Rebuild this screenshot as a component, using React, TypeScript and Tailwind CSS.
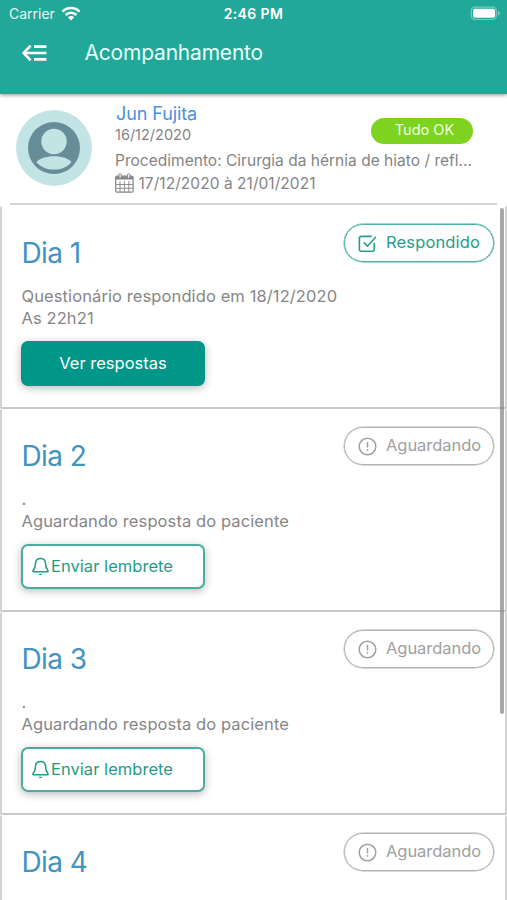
import clsx from "clsx";
import type { ReactNode } from "react";

type Day = {
  id: number;
  answered: boolean;
  lines?: string[];
};

const days: Day[] = [
  { id: 1, answered: true, lines: ["Questionário respondido em 18/12/2020", "As 22h21"] },
  { id: 2, answered: false, lines: [".", "Aguardando resposta do paciente"] },
  { id: 3, answered: false, lines: [".", "Aguardando resposta do paciente"] },
  { id: 4, answered: false },
];

function WifiIcon() {
  return (
    <svg width="20" height="15" viewBox="0 0 20 15" fill="none" stroke="white" strokeWidth="2.6">
      <path d="M1.5 5.6a12 12 0 0 1 17 0" />
      <path d="M4.6 9a7.6 7.6 0 0 1 10.8 0" />
      <path d="M10 14.4 6.9 11.3a4.4 4.4 0 0 1 6.2 0Z" fill="white" stroke="none" />
    </svg>
  );
}

function BatteryIcon() {
  return (
    <svg width="31" height="15" viewBox="0 0 31 15" fill="none">
      <rect x="1.3" y="1.1" width="25" height="12.4" rx="3.6" stroke="white" strokeOpacity="0.4" strokeWidth="1.2" />
      <rect x="3" y="2.8" width="22" height="9" rx="1.8" fill="white" />
      <path d="M28 5.2c1.2.4 1.7 1.2 1.7 2.1s-.5 1.7-1.7 2.1Z" fill="white" fillOpacity="0.45" />
    </svg>
  );
}

function BackIcon() {
  return (
    <svg width="26" height="18" viewBox="0 0 26 18" fill="none" stroke="white" strokeWidth="2.6">
      <path d="M9.6 1.7 2.6 9l7 7.3" />
      <path d="M3 9h22.400M13 2.600h12.400M13 15.400h12.400" />
    </svg>
  );
}

function Avatar() {
  return (
    <svg width="76" height="76" viewBox="0 0 76 76">
      <circle cx="38" cy="38" r="38" fill="#c3e4e5" />
      <circle cx="38" cy="38" r="26" fill="#678e98" />
      <circle cx="38" cy="31.500" r="12.700" fill="#c3e4e5" />
      <path d="M20.500 52.200C23 48.500 30 46.300 38 46.300s15 2.200 17.500 5.900C51 57.300 45 59.600 38 59.600s-13-2.300-17.500-7.400Z" fill="#c3e4e5" />
    </svg>
  );
}

function CalendarIcon() {
  return (
    <svg width="19" height="20" viewBox="0 0 19 20" fill="none" stroke="#858585">
      <rect x="0.7" y="3.2" width="17.4" height="16" rx="1.2" strokeWidth="1.2" />
      <path d="M0.7 5h17.4" strokeWidth="3" />
      <path d="M5 8v11M9.400 8v11M13.800 8v11M1 11.500h17M1 15.300h17" strokeWidth="0.9" />
      <rect x="4" y="0.7" width="2.2" height="4.5" rx="1" fill="white" />
      <rect x="12.6" y="0.7" width="2.2" height="4.5" rx="1" fill="white" />
    </svg>
  );
}

function CheckIcon() {
  return (
    <svg width="19" height="19" viewBox="0 0 19 19" fill="none" stroke="currentColor" strokeWidth="1.6" strokeLinecap="round" strokeLinejoin="round">
      <path d="M13.200 2.400H3.100A1.700 1.700 0 0 0 1.400 4.100v11.400a1.700 1.700 0 0 0 1.700 1.700h11.500a1.700 1.700 0 0 0 1.700-1.700V9.200" />
      <path d="m6.300 8.900 3.200 3.300 8-8.900" />
    </svg>
  );
}

function AlertIcon() {
  return (
    <svg width="19" height="19" viewBox="0 0 19 19" fill="none" stroke="currentColor" strokeWidth="1.5">
      <circle cx="9.500" cy="9.500" r="8.300" />
      <path d="M9.500 5.600v4.400" strokeLinecap="round" />
      <circle cx="9.500" cy="12.900" r="0.900" fill="currentColor" stroke="none" />
    </svg>
  );
}

function BellIcon() {
  return (
    <svg width="17" height="19" viewBox="0 0 17 19" fill="none" stroke="currentColor" strokeWidth="1.5" strokeLinejoin="round">
      <path d="M8.500 1.400c3.100 0 4.900 2.200 5 5 .1 4 .5 5.100 2.500 7.300.3.500 0 1-.5 1h-14c-.5 0-.8-.5-.5-1 2-2.200 2.400-3.300 2.500-7.300.1-2.800 1.900-5 5-5Z" />
      <path d="M6.400 16.800c.5.900 1.200 1.300 2.100 1.300s1.600-.4 2.100-1.300Z" fill="currentColor" stroke="none" />
    </svg>
  );
}

function StatusPill({ answered }: { answered: boolean }) {
  return (
    <div
      className={clsx(
        "mt-[17.5px] flex h-[38.5px] w-[150px] items-center rounded-full border pl-[13.5px] ring-[0.5px]",
        answered
          ? "border-[#4bb0a3] text-[#259d8e] ring-[#4bb0a3]"
          : "border-[#b4b4b4] text-[#a0a0a0] ring-[#b4b4b4]",
      )}
    >
      <span className="mt-[2px] w-[28px]">{answered ? <CheckIcon /> : <AlertIcon />}</span>
      <span
        className={clsx(
          "-mt-[2px] text-[16.5px] leading-5",
          answered ? "tracking-[0.15px]" : "tracking-[-0.05px]",
        )}
      >
        {answered ? "Respondido" : "Aguardando"}
      </span>
    </div>
  );
}

function CardButton({ filled, children }: { filled?: boolean; children: ReactNode }) {
  return (
    <button
      className={clsx(
        "-ml-[0.5px] mt-[12px] flex h-[44.5px] w-[184px] items-center rounded-[7px] text-[16.5px] shadow-[0_2px_9px_rgba(0,0,0,0.28)]",
        filled
          ? "justify-center bg-[#009688] text-white"
          : "border-2 border-[#4bab9f] bg-white pl-[9px] tracking-[0.04px] text-[#1f9c86]",
      )}
    >
      {children}
    </button>
  );
}

function DayCard({ day }: { day: Day }) {
  return (
    <article className="h-[203px] shrink-0 rounded-[2px] border-x-2 border-b-2 border-x-[#d2d2d2] border-b-[#c9c9c9] pl-[19.5px]">
      <div className="flex h-[78.5px] justify-between pr-[11.5px]">
        <h2 className="mt-[29px] text-[28px] leading-9 tracking-[-0.6px] text-[#4393c0]">Dia {day.id}</h2>
        <StatusPill answered={day.answered} />
      </div>
      {day.lines && (
        <>
          <div className="text-[16.5px] leading-[22.4px] tracking-[0.1px] text-[#868686]">
            {day.lines.map((line) => (
              <p key={line}>{line}</p>
            ))}
          </div>
          {day.answered ? (
            <CardButton filled>Ver respostas</CardButton>
          ) : (
            <CardButton>
              <BellIcon />
              <span className="ml-[2px]">Enviar lembrete</span>
            </CardButton>
          )}
        </>
      )}
    </article>
  );
}

export default function App() {
  return (
    <div className="relative flex h-[900px] w-[507px] flex-col overflow-hidden bg-white font-['Inter','Liberation_Sans',sans-serif]">
      <header className="relative h-[94px] shrink-0 bg-[#22a899] text-white shadow-[0_1px_4px_rgba(0,0,0,0.45)]">
        <div className="grid h-[27px] grid-cols-3 items-center pl-[9px] pr-[6px]">
          <div className="flex items-center gap-[6px] text-[14px] text-[#e2f8f4]">
            Carrier <WifiIcon />
          </div>
          <span className="-ml-[3px] text-center text-[14px] font-semibold tracking-[0.4px]">2:46 PM</span>
          <div className="flex justify-end">
            <BatteryIcon />
          </div>
        </div>
        <div className="flex h-[51px] items-center pl-[21px]">
          <BackIcon />
          <h1 className="ml-[37.5px] text-[21px] leading-7 tracking-[-0.2px] text-[#e4fffb]">Acompanhamento</h1>
        </div>
      </header>

      <section className="mx-[10px] flex h-[111px] shrink-0 border-b-2 border-[#d4d4d4] pl-[6px]">
        <div className="mt-[15.5px]">
          <Avatar />
        </div>
        <div className="ml-[23px] w-[358px] text-[15.5px] text-[#848484]">
          <div className="flex h-[51px] justify-between">
            <div>
              <p className="ml-px mt-[9px] text-[18px] leading-[22px] tracking-[-0.1px] text-[#4a90e2]">Jun Fujita</p>
              <p className="mt-px text-[14.5px] leading-[18px]">16/12/2020</p>
            </div>
            <span className="mt-[24px] flex h-[26px] w-[102px] items-center justify-center rounded-full bg-[#7ed321] pb-[2px] pl-[5px] text-[14.5px] text-[#f0ffe0]">
              Tudo OK
            </span>
          </div>
          <p className="mt-[5.5px] whitespace-nowrap leading-[20px] tracking-[0.02px]">
            Procedimento: Cirurgia da hérnia de hiato / refl...
          </p>
          <div className="mt-[2px] flex items-center gap-[4.5px] leading-[22px]">
            <span className="-mt-[2px]">
              <CalendarIcon />
            </span>
            <span className="tracking-[0.05px]">17/12/2020 à 21/01/2021</span>
          </div>
        </div>
      </section>

      <main className="mt-px flex flex-col">
        {days.map((day) => (
          <DayCard key={day.id} day={day} />
        ))}
      </main>

      {/* scroll indicator */}
      <div className="absolute right-[3.5px] top-[208px] h-[506px] w-[4px] rounded-full bg-[#828282]/70" />
    </div>
  );
}
